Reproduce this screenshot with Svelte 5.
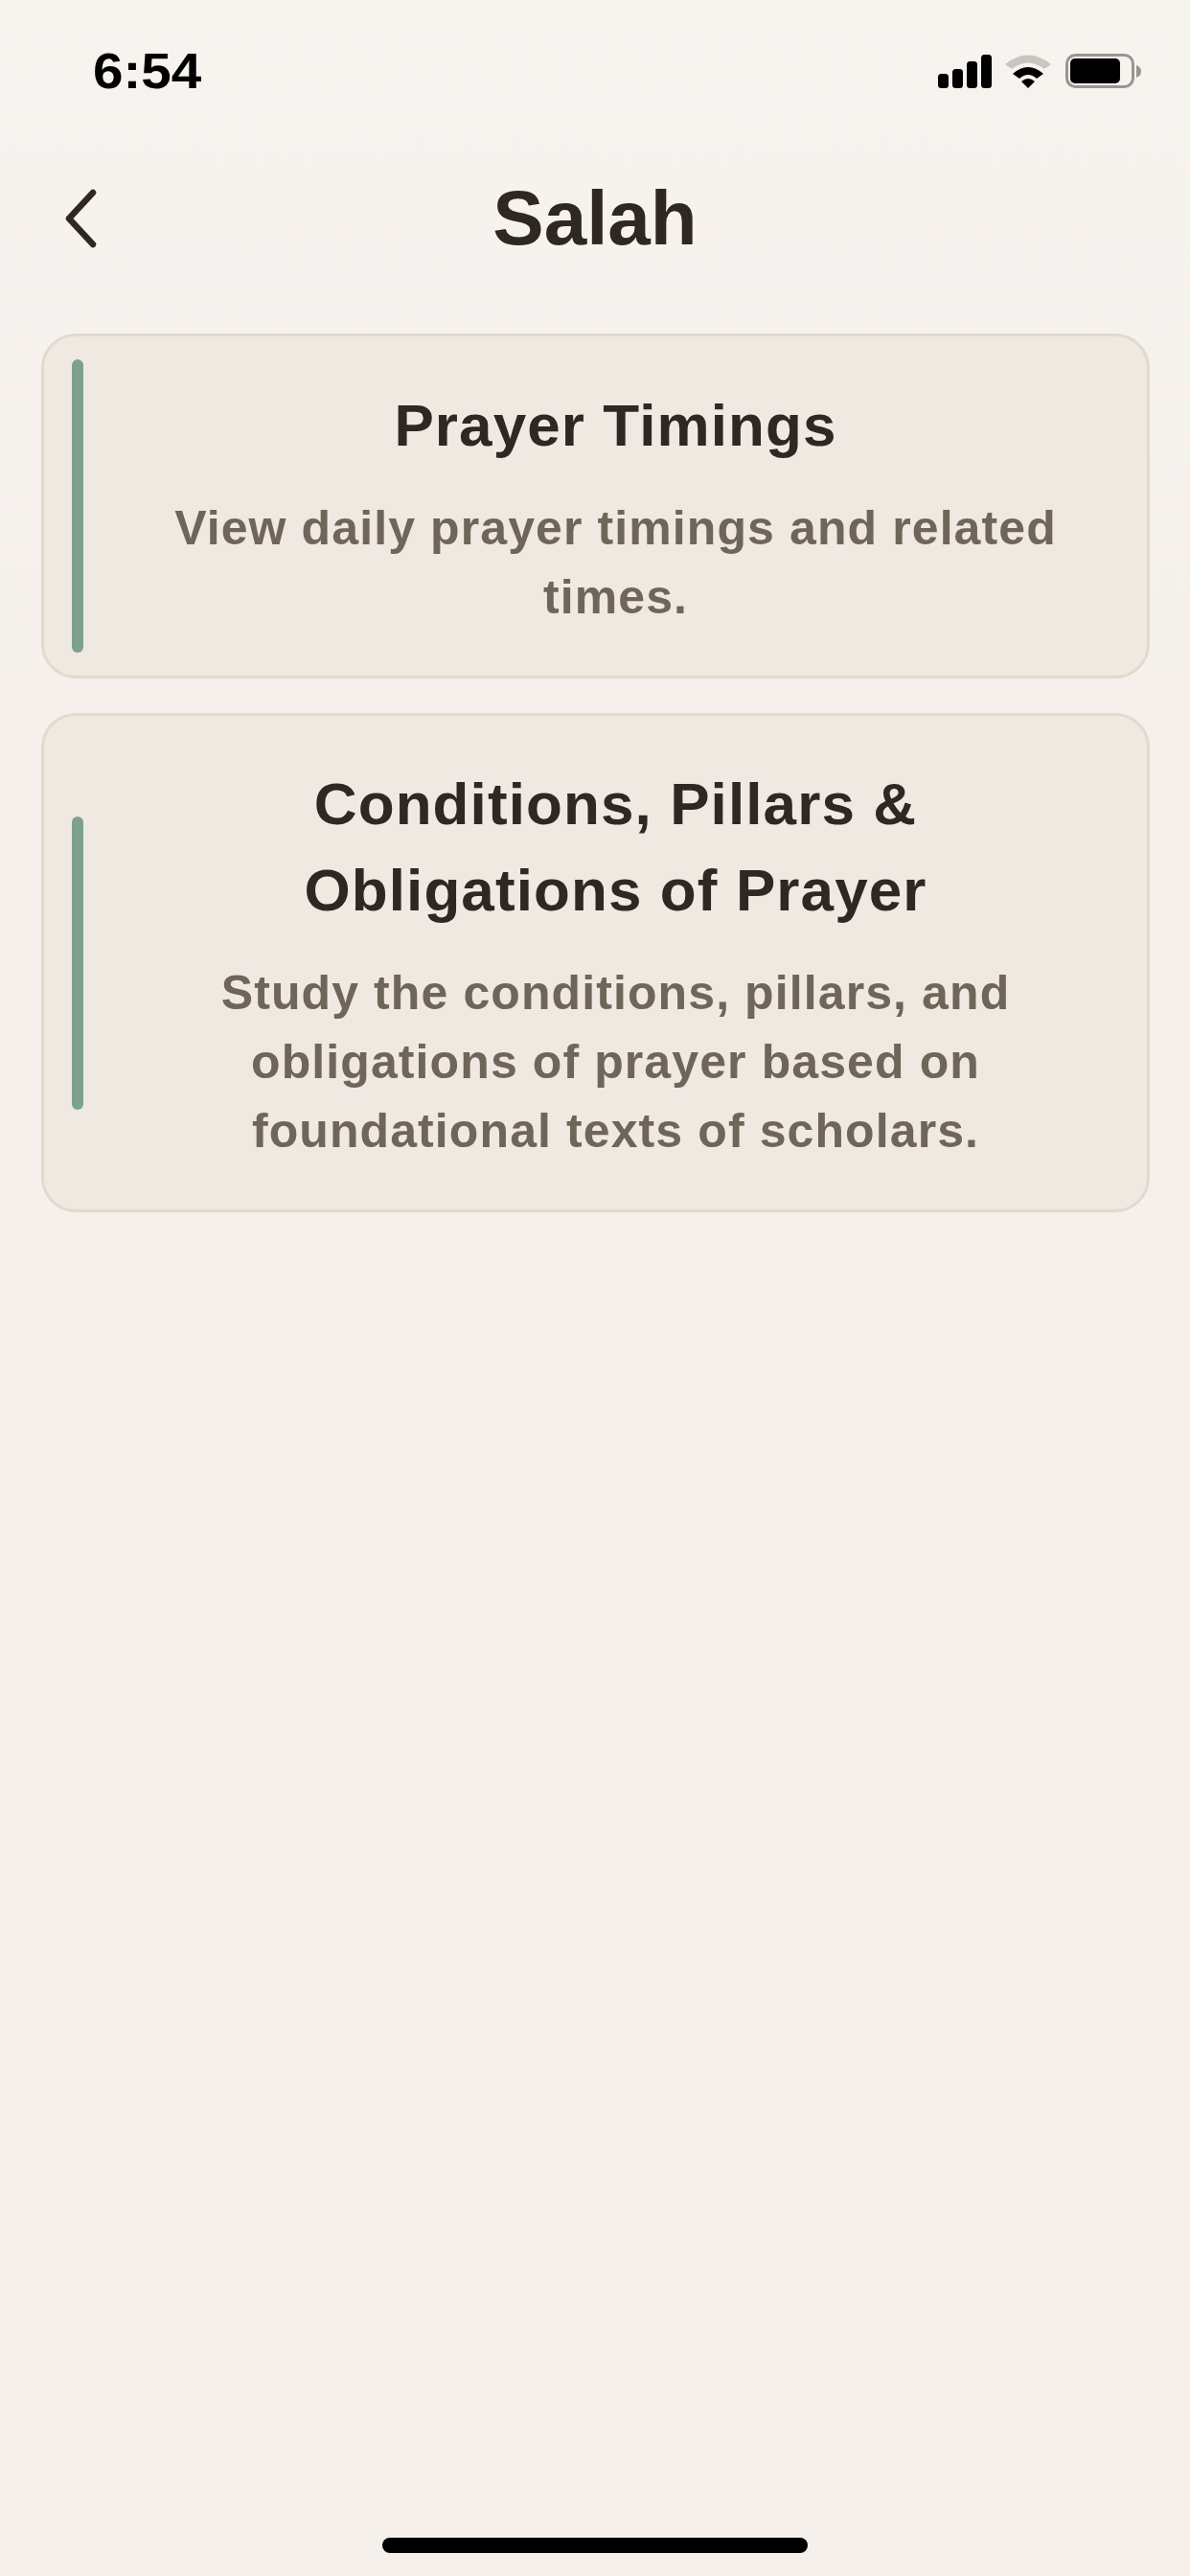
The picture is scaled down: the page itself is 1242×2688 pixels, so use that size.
<script>
  const cards = [
    {
      title: 'Prayer Timings',
      text: 'View daily prayer timings and related times.'
    },
    {
      title: 'Conditions, Pillars & Obligations of Prayer',
      text: 'Study the conditions, pillars, and obligations of prayer based on foundational texts of scholars.'
    }
  ];
</script>

<div class="screen">
  <div class="status">
    <span class="time">6:54</span>
    <svg class="status-icons" width="212" height="36" viewBox="0 0 212 36">
      <rect x="0" y="21" width="11" height="15" rx="3.5" />
      <rect x="15" y="16" width="11" height="20" rx="3.5" />
      <rect x="30" y="8" width="11" height="28" rx="3.5" />
      <rect x="45" y="1" width="11" height="35" rx="3.5" />
      <path fill="#c9c6c1" d="M70 11 Q94 -8 118 11 L111 16 Q94 3 77 16 Z" />
      <path d="M78 21 Q94 7 110 21 L103 26 Q94 18 85 26 Z" />
      <path d="M87 29 Q94 23 101 29 L94 36 Z" />
      <rect x="134.5" y="1.5" width="69" height="33" rx="9" fill="none" stroke="#999590" stroke-width="3" />
      <rect x="138" y="5" width="52" height="26" rx="5" />
      <path fill="#999590" d="M207 12 Q212 14 212 18.500 Q212 23 207 25 Z" />
    </svg>
  </div>

  <header class="header">
    <button class="back" aria-label="Back">
      <svg width="36" height="62" viewBox="0 0 36 62">
        <path d="M31 4 L6 31 L31 58" fill="none" stroke="#2f2721" stroke-width="6.500" stroke-linecap="round" stroke-linejoin="round" />
      </svg>
    </button>
    <h1>Salah</h1>
  </header>

  <main class="list">
    {#each cards as card}
      <div class="card">
        <span class="accent"></span>
        <div class="body">
          <h2>{card.title}</h2>
          <p>{card.text}</p>
        </div>
      </div>
    {/each}
  </main>

  <div class="home"></div>
</div>

<style>
  :global(body) {
    margin: 0;
    background: #f5f0eb;
  }

  .screen {
    height: 2688px;
    display: flex;
    flex-direction: column;
    background: linear-gradient(#f7f3ef, #f5f0eb 700px);
    font-family: "Liberation Sans", Arial, sans-serif;
    overflow: hidden;
  }

  .status {
    height: 148px;
    box-sizing: border-box;
    padding: 56px 51px 0 97px;
    display: flex;
    justify-content: space-between;
    align-items: flex-start;
  }

  .time {
    display: inline-block;
    font-size: 51px;
    line-height: 38px;
    font-weight: 700;
    color: #000;
    transform: scaleX(1.11);
    transform-origin: left center;
  }

  .header {
    height: 160px;
    display: flex;
    align-items: center;
    justify-content: center;
    position: relative;
  }

  .back {
    position: absolute;
    left: 66px;
    top: 49px;
    padding: 0;
    border: 0;
    background: none;
    line-height: 0;
  }

  h1 {
    margin: 0;
    font-size: 80px;
    line-height: 1;
    font-weight: 700;
    color: #2f2721;
  }

  .list {
    margin-top: 40px;
    padding: 0 42px 0 43px;
    display: flex;
    flex-direction: column;
    gap: 36px;
  }

  .card {
    display: flex;
    align-items: center;
    gap: 30px;
    padding: 24px 29px;
    background: #f0e9e2;
    border: 3px solid #e2dacd;
    border-radius: 36px;
  }

  .accent {
    flex: none;
    width: 12px;
    height: 306px;
    border-radius: 6px;
    background: #7da18d;
  }

  .body {
    flex: 1;
    text-align: center;
    padding: 23px 50px 22px;
  }

  h2 {
    margin: 0;
    font-size: 62px;
    line-height: 90px;
    font-weight: 700;
    letter-spacing: 1.1px;
    color: #2f2721;
  }

  p {
    margin: 26px 0 0;
    font-size: 50px;
    line-height: 72px;
    font-weight: 700;
    letter-spacing: 1.1px;
    color: #6f6559;
  }

  .home {
    margin-top: auto;
    margin-bottom: 24px;
    align-self: center;
    width: 444px;
    height: 16px;
    border-radius: 8px;
    background: #000;
  }
</style>
